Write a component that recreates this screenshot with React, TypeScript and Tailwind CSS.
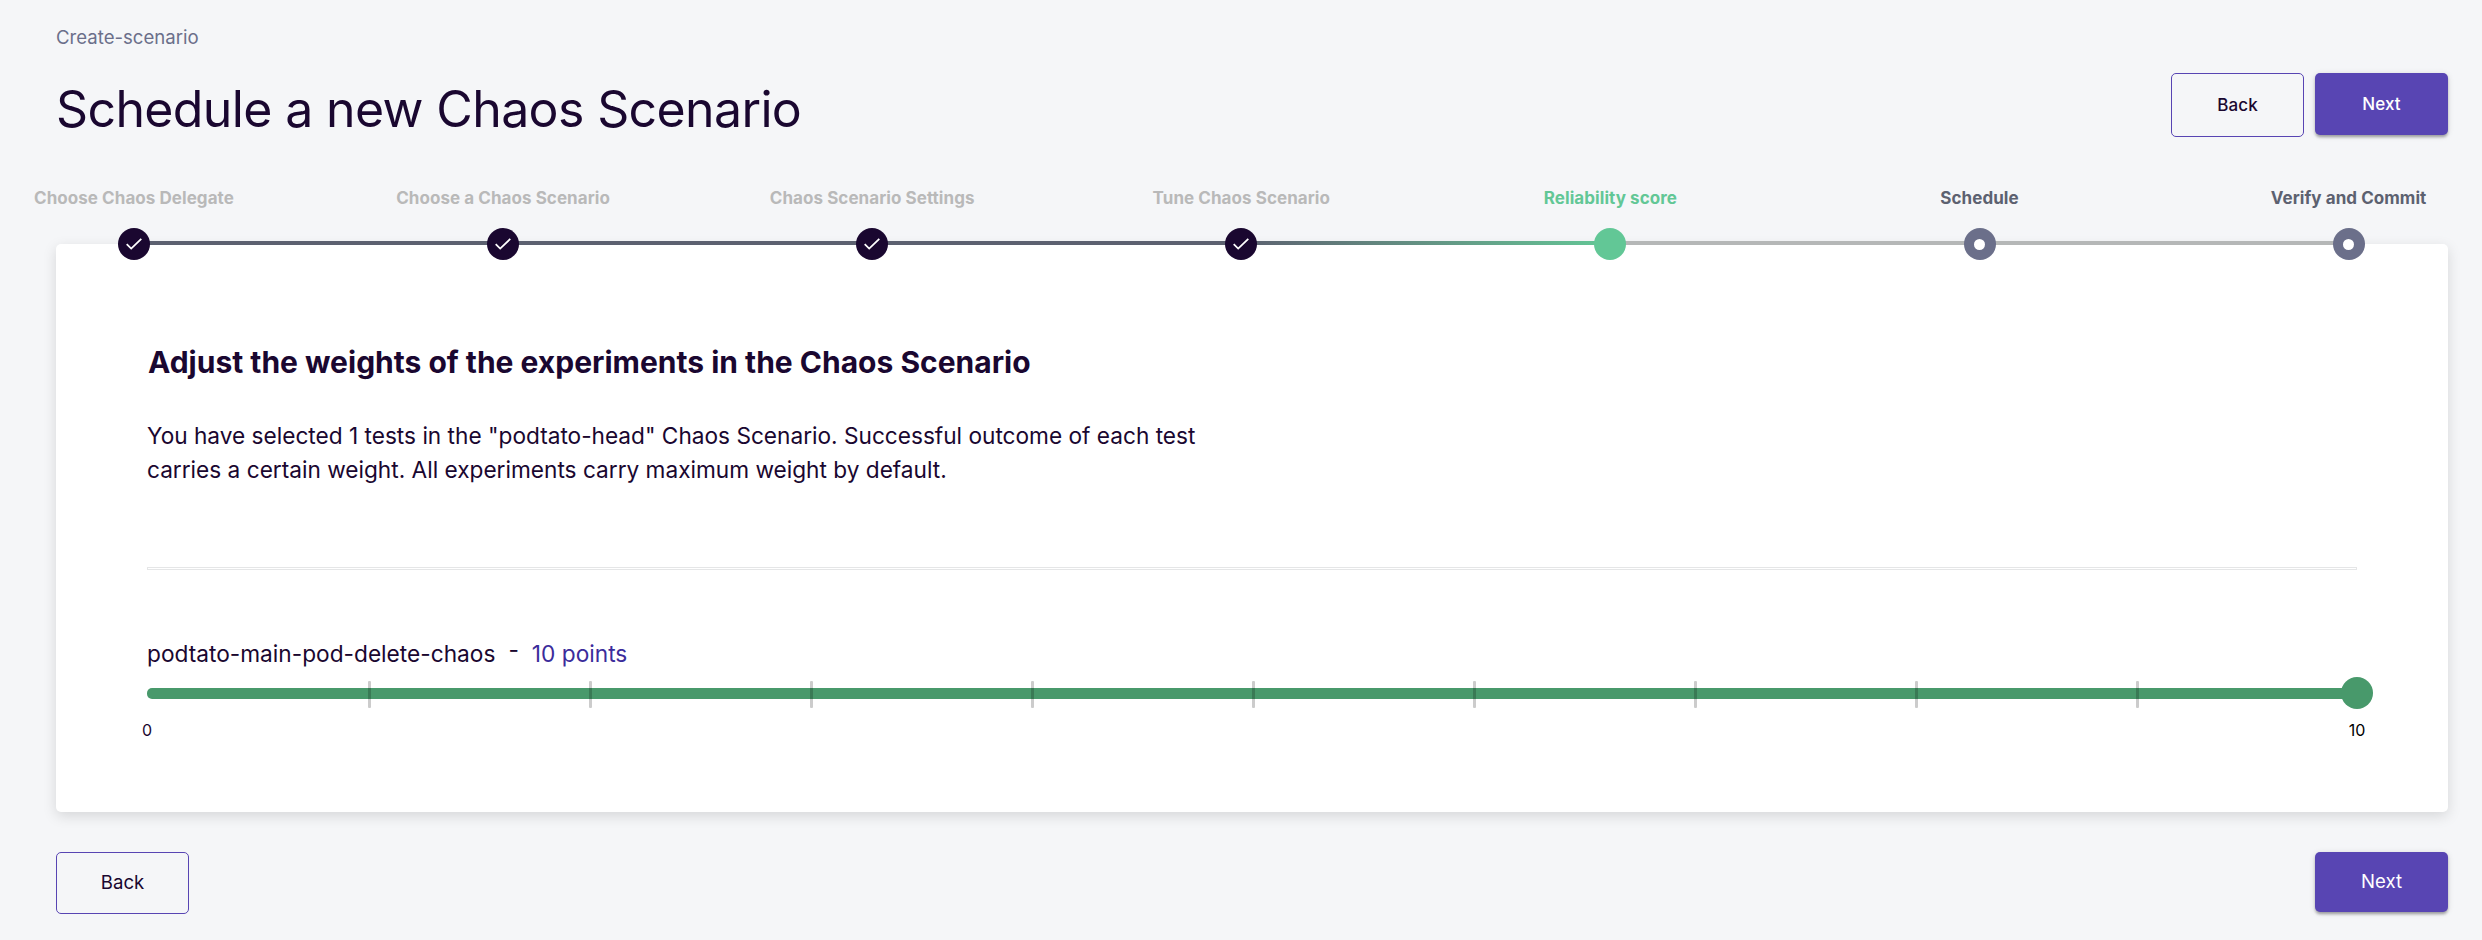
const steps = [
  { label: 'Choose Chaos Delegate', state: 'done' },
  { label: 'Choose a Chaos Scenario', state: 'done' },
  { label: 'Chaos Scenario Settings', state: 'done' },
  { label: 'Tune Chaos Scenario', state: 'done' },
  { label: 'Reliability score', state: 'active' },
  { label: 'Schedule', state: 'todo' },
  { label: 'Verify and Commit', state: 'todo' },
];

const labelColor: Record<string, string> = {
  done: 'text-[#b9b9b9]',
  active: 'text-[#62c796]',
  todo: 'text-[#5c6170]',
};

const dotColor: Record<string, string> = {
  done: 'bg-[#1a0730]',
  active: 'bg-[#62c796]',
  todo: 'bg-[#6b6f8a]',
};

function lineColor(index: number) {
  if (index < 3) return 'bg-[#5c6170]';
  if (index === 3) return 'bg-linear-to-r from-[#5c6170] to-[#62c796]';
  return 'bg-[#b5b7b7]';
}

function Stepper() {
  return (
    <div className="-ml-[106.6px] -mr-[85.2px] flex">
      {steps.map((s, i) => (
        <div key={s.label} className="relative flex flex-1 flex-col items-center">
          <span className={`text-[17px] leading-6 font-bold tracking-[0.06px] whitespace-nowrap ${labelColor[s.state]}`}>{s.label}</span>
          {i < steps.length - 1 && <div className={`absolute top-[55px] left-1/2 h-1 w-full ${lineColor(i)}`} />}
          <div className={`z-10 mt-[18px] flex size-8 items-center justify-center rounded-full ${dotColor[s.state]}`}>
            {s.state === 'done' && (
              <svg width="16" height="12" viewBox="0 0 16 12" fill="none" stroke="#fff" strokeWidth="1.8">
                <path d="M0.7 6.2 L5.2 10.6 L15.3 0.9" />
              </svg>
            )}
            {s.state === 'todo' && <div className="size-[11px] rounded-full bg-white" />}
          </div>
        </div>
      ))}
    </div>
  );
}

const nextClass =
  'flex w-[133px] items-center justify-center rounded-[5px] bg-[#5845b3] text-white shadow-[0_3px_3px_-1px_rgba(0,0,0,0.2),0_2px_3px_0_rgba(0,0,0,0.14),0_1px_6px_0_rgba(0,0,0,0.12)]';
const backClass = 'flex w-[133px] items-center justify-center rounded-[5px] border border-[#5845b3] text-[#1a0730]';

function WeightSlider() {
  return (
    <div className="relative flex h-8 items-center">
      <div className="h-[11px] w-full rounded-[5px] bg-[#48996b]" />
      {[1, 2, 3, 4, 5, 6, 7, 8, 9].map((n) => (
        <div
          key={n}
          className="absolute top-1 h-[27px] w-[3px] rounded-[1px] bg-black/20"
          style={{ left: `${n * 10}%` }}
        />
      ))}
      <div className="absolute -right-4 size-8 rounded-full bg-[#48996b]" />
    </div>
  );
}

export default function App() {
  return (
    <div className="h-[940px] overflow-hidden bg-[#f5f6f8] pr-[34px] pl-14 font-['Inter',sans-serif] text-[#1a0730]">
      <p className="pt-[25px] text-[18.6px] leading-6 text-[#6b6f8a]">Create-scenario</p>
      <header className="mt-6 flex items-start justify-between">
        <h1 className="pt-1 text-[50px] leading-[64px] tracking-[-0.63px]">Schedule a new Chaos Scenario</h1>
        <div className="flex items-start gap-[11px]">
          <button className={`${backClass} h-16 pt-px text-[17px] font-medium tracking-[0.1px]`}>Back</button>
          <button className={`${nextClass} h-[62px] pt-px text-[17px] font-medium tracking-[0.1px]`}>Next</button>
        </div>
      </header>
      <div className="relative z-10 mt-[45px]">
        <Stepper />
      </div>
      <main className="-mt-4 h-[568px] rounded-[5px] bg-white px-[91px] pt-[98px] shadow-[0_4px_14px_rgba(0,0,0,0.13)]">
        <h2 className="pl-px text-[30px] leading-10 font-bold">Adjust the weights of the experiments in the Chaos Scenario</h2>
        <p className="mt-[37px] w-[1100px] text-[22.65px] leading-[34px]">
          You have selected 1 tests in the "podtato-head" Chaos Scenario. Successful outcome of each test
          <br />
          carries a certain weight. All experiments carry maximum weight by default.
        </p>
        <div className="mt-[80px] h-[3px] border border-[#e5e6e7]" />
        <div className="mt-[68px] flex text-[22.7px] leading-8">
          <span>podtato-main-pod-delete-chaos</span>
          <span className="mx-[13px] -mt-1">-</span>
          <span className="text-[#3b2c9b]">10 points</span>
        </div>
        <div className="mt-[7px]">
          <WeightSlider />
        </div>
        <div className="-mx-5 mt-[9px] flex justify-between text-[16px] leading-6">
          <span className="w-10 text-center">0</span>
          <span className="w-10 text-center text-black">10</span>
        </div>
      </main>
      <footer className="mt-10 flex items-start justify-between">
        <button className={`${backClass} h-[62px] text-[18.6px]`}>Back</button>
        <button className={`${nextClass} h-[60px] pb-px text-[18.6px]`}>Next</button>
      </footer>
    </div>
  );
}
